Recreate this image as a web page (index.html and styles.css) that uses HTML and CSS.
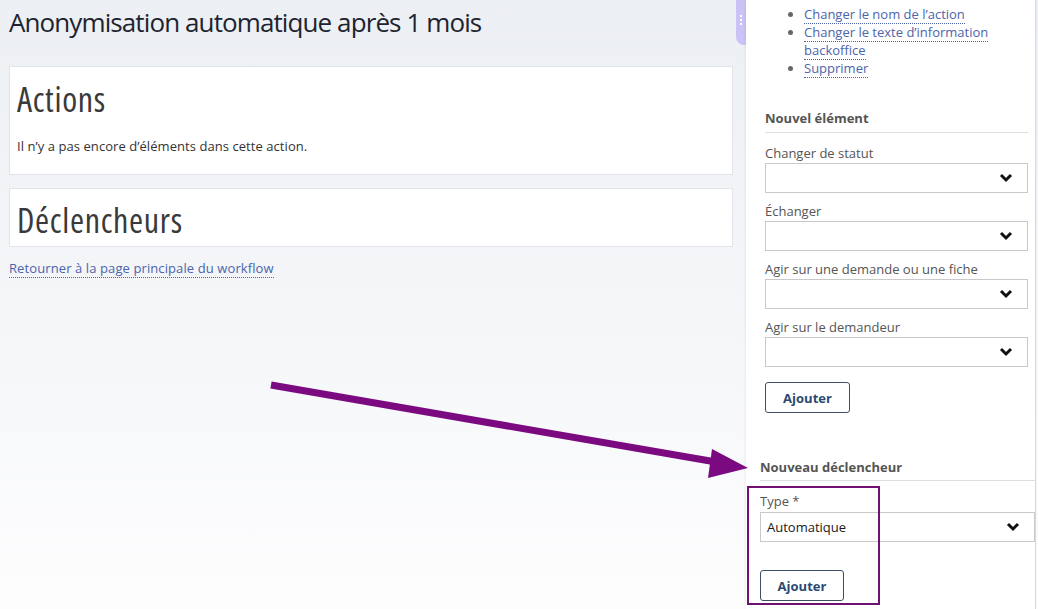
FILE: index.html
```html
<!DOCTYPE html>
<html lang="fr">
<head>
<meta charset="utf-8">
<title>Anonymisation automatique après 1 mois</title>
<link rel="stylesheet" href="styles.css">
</head>
<body>
<div class="page">
  <main class="main">
    <h1 class="title">Anonymisation automatique après 1 mois</h1>
    <section class="card">
      <h2 class="card-title">Actions</h2>
      <p class="card-text">Il n’y a pas encore d’éléments dans cette action.</p>
    </section>
    <section class="card card-short">
      <h2 class="card-title">Déclencheurs</h2>
    </section>
    <a class="back-link" href="#">Retourner à la page principale du workflow</a>
  </main>
  <div class="handle"><span class="dots"></span></div>
  <aside class="sidebar">
    <ul class="links">
      <li><a href="#">Changer le nom de l’action</a></li>
      <li><a href="#">Changer le texte d’information backoffice</a></li>
      <li><a href="#">Supprimer</a></li>
    </ul>
    <div class="block">
      <h3 class="block-title">Nouvel élément</h3>
      <div class="field"><label>Changer de statut</label><div class="select"><span></span><svg class="chev" viewBox="0 0 14 10"><polyline points="2,2 7,7 12,2"/></svg></div></div>
      <div class="field"><label>Échanger</label><div class="select"><span></span><svg class="chev" viewBox="0 0 14 10"><polyline points="2,2 7,7 12,2"/></svg></div></div>
      <div class="field"><label>Agir sur une demande ou une fiche</label><div class="select"><span></span><svg class="chev" viewBox="0 0 14 10"><polyline points="2,2 7,7 12,2"/></svg></div></div>
      <div class="field"><label>Agir sur le demandeur</label><div class="select"><span></span><svg class="chev" viewBox="0 0 14 10"><polyline points="2,2 7,7 12,2"/></svg></div></div>
      <button class="btn" type="button">Ajouter</button>
    </div>
    <div class="block block-trigger">
      <h3 class="block-title">Nouveau déclencheur</h3>
      <div class="field"><label>Type <span class="req">*</span></label><div class="select"><span>Automatique</span><svg class="chev" viewBox="0 0 14 10"><polyline points="2,2 7,7 12,2"/></svg></div></div>
      <button class="btn btn-trigger" type="button">Ajouter</button>
    </div>
  </aside>
</div>
<div class="highlight"></div>
<svg class="arrow" width="1038" height="609" viewBox="0 0 1038 609">
  <line x1="271" y1="385" x2="716" y2="462" />
  <polygon points="748,468 712,449 708,478" />
</svg>
</body>
</html>
```
FILE: styles.css
```css
html, body {
  margin: 0;
  padding: 0;
}
body {
  width: 1038px;
  height: 609px;
  overflow: hidden;
  font-family: "Open Sans", "DejaVu Sans", sans-serif;
  background: linear-gradient(#eceff3, #fdfdfe);
  position: relative;
}
.page {
  display: flex;
  height: 609px;
}
.main {
  width: 724px;
  padding-left: 9px;
  flex: none;
}
.title {
  margin: 0;
  padding-top: 4px;
  font-size: 26px;
  line-height: 36px;
  font-weight: 400;
  color: #1d2430;
  letter-spacing: -0.9px;
  white-space: nowrap;
}
.card {
  margin-top: 26px;
  background: #fff;
  border: 1px solid #e1e5ea;
  height: 107px;
  padding: 0 7px;
}
.card-short {
  margin-top: 13px;
  height: 57px;
}
.card-title {
  margin: 0;
  padding-top: 14px;
  font-size: 34px;
  line-height: 36px;
  font-weight: 400;
  color: #3a3a3a;
  font-stretch: 75%;
  letter-spacing: 0.7px;
}
.card-short .card-title {
  padding-top: 13px;
}
.card-text {
  margin: 20px 0 0;
  font-size: 13px;
  line-height: 18px;
  color: #333;
  letter-spacing: 0.06px;
}
.back-link {
  display: inline-block;
  margin-top: 12px;
  font-size: 13px;
  line-height: 18px;
  color: #4a64ad;
  text-decoration: none;
  border-bottom: 1px dotted #4a64ad;
  letter-spacing: 0.1px;
}
.handle {
  flex: none;
  width: 10px;
  height: 45px;
  margin-left: 3px;
  background: #cbc3f7;
  border-bottom-left-radius: 8px;
  display: flex;
  justify-content: center;
  padding-top: 14px;
  box-sizing: border-box;
}
.dots {
  width: 2px;
  height: 12px;
  background: radial-gradient(circle, #fff 0.9px, transparent 1.1px) 0 0 / 2px 4px repeat-y;
}
.sidebar {
  flex: none;
  width: 289px;
  background: #fff;
  border-right: 1px solid #d8d8d8;
  box-shadow: -1px 0 3px rgba(0,0,0,0.06);
  color: #555;
  font-size: 13px;
}
.links {
  margin: 5px 0 0;
  padding: 0 0 0 58px;
  list-style: disc;
  color: #666;
  line-height: 18px;
}
.links a {
  color: #4d64ab;
  text-decoration: none;
  border-bottom: 1px dotted #4d64ab;
}
.block {
  padding: 0 7px 0 19px;
  margin-top: 31px;
}
.block-title {
  margin: 0 0 10px;
  font-size: 13px;
  line-height: 20px;
  font-weight: 700;
  color: #555;
  padding-bottom: 4px;
  border-bottom: 1px solid #dedede;
}
.field {
  margin-bottom: 8px;
}
.field label {
  display: block;
  line-height: 20px;
  color: #555;
}
.req {
  color: #555;
}
.select {
  height: 30px;
  box-sizing: border-box;
  border: 1px solid #c9c9c9;
  background: #fff;
  display: flex;
  align-items: center;
  justify-content: space-between;
  padding: 0 14px 0 6px;
  color: #1a1a1a;
}
.chev {
  width: 14px;
  height: 10px;
  fill: none;
  stroke: #111;
  stroke-width: 3;
}
.btn {
  margin-top: 7px;
  width: 85px;
  height: 31px;
  border: 1px solid #3d5068;
  border-radius: 3px;
  background: #fff;
  font-family: inherit;
  font-size: 13px;
  font-weight: 700;
  color: #2b4a72;
  padding: 0;
}
.block-trigger {
  padding: 0 0 0 14px;
  margin-top: 44px;
}
.block-trigger .block-title {
  padding-bottom: 3px;
}
.block-trigger .select {
  margin-top: 1px;
}
.btn-trigger {
  margin-top: 20px;
  width: 84px;
}
.highlight {
  position: absolute;
  left: 747px;
  top: 486px;
  width: 129px;
  height: 115px;
  border: 2px solid #6f1174;
}
.arrow {
  position: absolute;
  left: 0;
  top: 0;
  pointer-events: none;
}
.arrow line {
  stroke: #7b0a80;
  stroke-width: 7;
}
.arrow polygon {
  fill: #7b0a80;
}
```
